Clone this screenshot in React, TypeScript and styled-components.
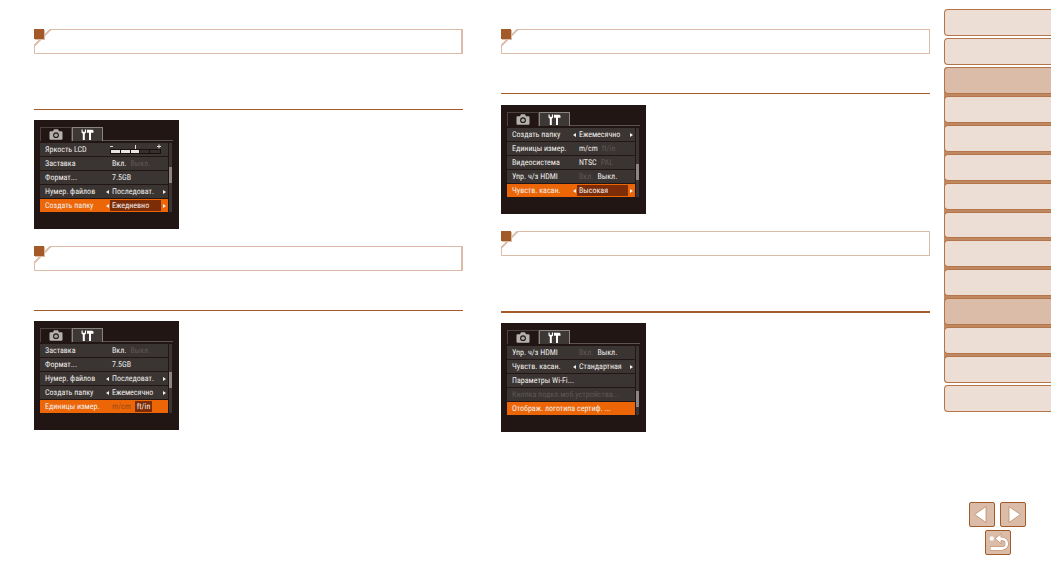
import React from "react";
import styled, { createGlobalStyle, css } from "styled-components";

const BROWN = "#a35a28";
const TAN = "#dbbca8";
const PALE = "#ecddd5";

const GlobalStyle = createGlobalStyle`
  * { box-sizing: border-box; }
  body {
    margin: 0;
    background: #fff;
    font-family: "Roboto Condensed", Roboto, "Liberation Sans", sans-serif;
    text-rendering: geometricPrecision;
  }
`;

const Page = styled.div`
  display: flex;
  align-items: flex-start;
  min-height: 100vh;
`;

const Columns = styled.main`
  flex: 1;
  display: grid;
  grid-template-columns: 1fr 1fr;
  gap: 38px;
  padding: 29px 14px 0 34px;
`;

const Column = styled.div`
  display: flex;
  flex-direction: column;
  gap: 17px;
`;

const Section = styled.section`
  display: flex;
  flex-direction: column;
`;

const Heading = styled.h2`
  display: flex;
  height: 25px;
  margin: 0;
`;

const HeadingFrame = styled.span<{ $edge: number }>`
  flex: 1;
  border: 1px solid ${TAN};
  border-left: 0;
  border-right-width: ${(p) => p.$edge}px;
`;

const Rule = styled.hr<{ $above: number; $below?: number; $weight?: number }>`
  width: 100%;
  height: ${(p) => p.$weight ?? 1}px;
  margin: ${(p) => p.$above}px 0 ${(p) => p.$below ?? 10}px;
  border: 0;
  background: ${BROWN};
`;

const Screen = styled.div`
  width: 145px;
  height: 109px;
  padding: 7px 6px;
  background: #221614;
  font-size: 8px;
  line-height: 13px;
`;

const TabBar = styled.div`
  display: flex;
  height: 14px;
  border-bottom: 1px solid #5a5350;
`;

const TabButton = styled.button<{ $active?: boolean }>`
  display: flex;
  align-items: center;
  justify-content: center;
  width: ${(p) => (p.$active ? 31 : 32)}px;
  height: 14px;
  padding: 0;
  border: 1px solid ${(p) => (p.$active ? "#8a8583" : "#4a4340")};
  border-bottom: 0;
  border-radius: 1px 1px 0 0;
  background: ${(p) => (p.$active ? "#3d3836" : "#221614")};
`;

const MenuArea = styled.div`
  display: flex;
  gap: 1px;
  margin-top: 2px;
`;

const Rows = styled.div`
  flex: 1;
  display: flex;
  flex-direction: column;
  gap: 1px;
  max-width: 128px;
`;

const Row = styled.div<{ $selected?: boolean; $dim?: boolean }>`
  display: flex;
  align-items: center;
  height: 13px;
  padding: 0 2px 0 5px;
  white-space: nowrap;
  background: ${(p) => (p.$selected ? "#ec6608" : "#3a3432")};
  color: ${(p) => (p.$dim ? "#5f5856" : "#f0eeec")};
`;

const Label = styled.span<{ $full?: boolean }>`
  flex: none;
  width: ${(p) => (p.$full ? "auto" : "61px")};
`;

const Arrow = styled.svg`
  flex: none;
  width: 3px;
  height: 4px;
  fill: #f4f0ee;
`;

const Spacer = styled.span`
  flex: none;
  width: 3px;
`;

const Value = styled.span<{ $boxed?: boolean }>`
  flex: 1;
  height: 11px;
  margin: 0 2px 0 1px;
  padding-left: 2px;
  line-height: 11px;
  ${(p) => p.$boxed && css`background: #7d2c08;`}
`;

const Choice = styled.span<{ $state: "on" | "off" | "boxed"; $onOrange?: boolean }>`
  display: inline-block;
  margin-right: 4px;
  line-height: 11px;
  color: ${(p) => (p.$state !== "off" ? "#f0eeec" : p.$onOrange ? "#9a4a14" : "#5f5856")};
  ${(p) =>
    p.$state === "boxed" &&
    css`
      padding: 0 2px;
      background: #7d2c08;
    `}
`;

const Scrollbar = styled.div<{ $top: number }>`
  width: 3px;
  height: 69px;
  padding-top: ${(p) => p.$top}px;
  background: #3a3432;
`;

const Thumb = styled.div`
  height: 16px;
  background: #8b8684;
`;

const Sidebar = styled.aside`
  display: flex;
  flex-direction: column;
  width: 107px;
  padding-top: 9px;
`;

const Links = styled.nav`
  display: flex;
  flex-direction: column;
  gap: 2px;
`;

const LinkGroup = styled.div`
  display: flex;
  flex-direction: column;
  gap: 2px;
  height: 316px;
  border-radius: 4px 0 0 4px;
  background: #c08860;
`;

const SideLink = styled.a<{ $current?: boolean; $grouped?: boolean }>`
  display: block;
  ${(p) => (p.$grouped ? css`flex: 1;` : css`height: 27px;`)}
  border: 1px solid #b5754a;
  border-right: 0;
  border-radius: 4px 0 0 4px;
  background: ${(p) => (p.$current ? TAN : PALE)};
`;

const Pager = styled.div`
  display: flex;
  flex-wrap: wrap;
  align-self: center;
  justify-content: center;
  gap: 3px 5px;
  width: 57px;
  margin-top: 90px;
`;

const PagerButton = styled.button`
  width: 26px;
  height: 25px;
  padding: 0;
  border: 1px solid ${BROWN};
  border-radius: 2px;
  background: ${TAN};
  svg { display: block; }
`;

function SectionHeading({ edge = 1 }: { edge?: number }) {
  return (
    <Heading>
      <svg width="17" height="25" viewBox="0 0 17 25" aria-hidden="true">
        <path d="M17 .5h-1L.5 16v8.500H17" fill="none" stroke={TAN} />
        <path d="M16.500 .5L.5 16.500" fill="none" stroke={TAN} strokeWidth="1.800" />
        <path d="M1 1h10v10H1z" fill={TAN} />
        <path d="M0 0h10v10H0z" fill={BROWN} />
      </svg>
      <HeadingFrame $edge={edge} />
    </Heading>
  );
}

function CameraIcon() {
  return (
    <svg width="14" height="11" viewBox="0 0 14 11" aria-hidden="true">
      <path d="M1.500 2.200h2.500L5 .3h4l1 1.900h2.500q1 0 1 1v6.500q0 1-1 1h-11q-1 0-1-1V3.200q0-1 1-1z" fill="#b4b0ae" />
      <circle cx="7" cy="6.200" r="2.900" fill="#221614" />
      <circle cx="7" cy="6.200" r="1.800" fill="#aaa6a4" />
    </svg>
  );
}

function ToolsIcon() {
  return (
    <svg width="14" height="12" viewBox="0 0 14 12" aria-hidden="true">
      <path d="M.5 .5v3l1.300 1.300V11h2V4.800l1.300-1.300v-3H3.900v2.300H1.700V.5z" fill="#fff" />
      <path d="M6 .8h5.500l1 1v2H10V11H8V3.800H6z" fill="#fff" />
    </svg>
  );
}

const Meter = styled.svg`
  flex: none;
  display: block;
`;

function Brightness() {
  return (
    <Meter width="54" height="13" viewBox="0 0 54 13" aria-hidden="true">
      <path d="M1 3.500h3M48 3.500h4M50 1.500v4M26.500 2v4" stroke="#e0dcda" fill="none" />
      <path d="M1 6h51v5H1z" fill="#1a100e" />
      <path d="M2 7h9v3H2zM12 7h9v3h-9zM22 7h8v3h-8z" fill="#e8e4e2" />
      <path d="M31 7h9v3h-9zM41 7h10v3H41z" fill="#35302e" />
    </Meter>
  );
}

type Item = {
  label: string;
  value?: string;
  choices?: [string, string];
  chosen?: 0 | 1;
  brightness?: boolean;
  arrows?: boolean;
  dim?: boolean;
};

function MenuRow({ item, selected }: { item: Item; selected: boolean }) {
  const bare = !item.value && !item.choices && !item.brightness;
  return (
    <Row $selected={selected} $dim={item.dim}>
      <Label $full={bare}>{item.label}</Label>
      {!bare && (item.arrows ? <Arrow viewBox="0 0 3 4"><path d="M3 0v4L0 2z" /></Arrow> : <Spacer />)}
      {item.value && <Value $boxed={selected}>{item.value}</Value>}
      {item.brightness && <Brightness />}
      {item.choices && (
        <Value>
          {item.choices.map((c, i) => (
            <Choice
              key={c}
              $onOrange={selected}
              $state={i !== item.chosen ? "off" : selected ? "boxed" : "on"}
            >
              {c}
            </Choice>
          ))}
        </Value>
      )}
      {item.arrows && <Arrow viewBox="0 0 3 4"><path d="M0 0v4L3 2z" /></Arrow>}
    </Row>
  );
}

function CameraScreen({ items, scroll }: { items: Item[]; scroll: number }) {
  return (
    <Screen>
      <TabBar>
        <TabButton aria-label="Съемка"><CameraIcon /></TabButton>
        <TabButton $active aria-label="Настройка"><ToolsIcon /></TabButton>
      </TabBar>
      <MenuArea>
        <Rows>
          {items.map((item, i) => (
            <MenuRow key={item.label} item={item} selected={i === items.length - 1} />
          ))}
        </Rows>
        <Scrollbar $top={scroll}><Thumb /></Scrollbar>
      </MenuArea>
    </Screen>
  );
}

const saver: Item = { label: "Заставка", choices: ["Вкл.", "Выкл."], chosen: 0 };
const format: Item = { label: "Формат...", value: "7.5GB" };
const numbering: Item = { label: "Нумер. файлов", value: "Последоват.", arrows: true };
const hdmi: Item = { label: "Упр. ч/з HDMI", choices: ["Вкл.", "Выкл."], chosen: 1 };
const folder = (value: string): Item => ({ label: "Создать папку", value, arrows: true });
const units = (chosen: 0 | 1): Item => ({ label: "Единицы измер.", choices: ["m/cm", "ft/in"], chosen });
const touch = (value: string): Item => ({ label: "Чувств. касан.", value, arrows: true });

const folderMenu: Item[] = [{ label: "Яркость LCD", brightness: true }, saver, format, numbering, folder("Ежедневно")];
const unitsMenu: Item[] = [saver, format, numbering, folder("Ежемесячно"), units(1)];
const touchMenu: Item[] = [
  folder("Ежемесячно"),
  units(0),
  { label: "Видеосистема", choices: ["NTSC", "PAL"], chosen: 0 },
  hdmi,
  touch("Высокая"),
];
const logoMenu: Item[] = [
  hdmi,
  touch("Стандартная"),
  { label: "Параметры Wi-Fi..." },
  { label: "Кнопка подкл.моб.устройства...", dim: true },
  { label: "Отображ. логотипа сертиф. ..." },
];

const chapters = Array.from({ length: 11 }, (_, i) => i + 1);

export default function App() {
  return (
    <>
      <GlobalStyle />
      <Page>
        <Columns>
          <Column>
            <Section>
              <SectionHeading edge={2} />
              <Rule $above={55} />
              <CameraScreen items={folderMenu} scroll={24} />
            </Section>
            <Section>
              <SectionHeading edge={2} />
              <Rule $above={39} />
              <CameraScreen items={unitsMenu} scroll={28} />
            </Section>
          </Column>
          <Column>
            <Section>
              <SectionHeading />
              <Rule $above={39} $below={11} />
              <CameraScreen items={touchMenu} scroll={36} />
            </Section>
            <Section>
              <SectionHeading />
              <Rule $above={55} $weight={2} />
              <CameraScreen items={logoMenu} scroll={45} />
            </Section>
          </Column>
        </Columns>
        <Sidebar>
          <Links>
            <SideLink href="#cover" aria-label="Обложка" />
            <SideLink href="#before" aria-label="Перед началом работы" />
            <LinkGroup>
              {chapters.map((n) => (
                <SideLink key={n} href={`#chapter-${n}`} aria-label={`Глава ${n}`} $grouped $current={n === 1 || n === 9} />
              ))}
            </LinkGroup>
            <SideLink href="#index" aria-label="Алфавитный указатель" />
          </Links>
          <Pager>
            <PagerButton aria-label="Предыдущая страница">
              <svg width="24" height="23" viewBox="0 0 24 23"><path d="M16 3.500v16L4.500 11.500z" fill="#fff" stroke="#bf8a66" strokeWidth=".8" /></svg>
            </PagerButton>
            <PagerButton aria-label="Следующая страница">
              <svg width="24" height="23" viewBox="0 0 24 23"><path d="M8 3.500v16l11.500-8z" fill="#fff" stroke="#bf8a66" strokeWidth=".8" /></svg>
            </PagerButton>
            <PagerButton aria-label="Назад">
              <svg width="24" height="23" viewBox="0 0 24 23">
                <path d="M4 17.500h12a4.800 4.800 0 0 0 0-9.600H14" fill="none" stroke="#bf8a66" strokeWidth="4" />
                <path d="M9 7.700l6-5v10z" fill="#fff" stroke="#bf8a66" strokeWidth=".8" />
                <path d="M4.500 17.500H16a4.800 4.800 0 0 0 0-9.600H14" fill="none" stroke="#fff" strokeWidth="2.800" />
                <circle cx="5.800" cy="7.500" r="2.200" fill="#fff" />
              </svg>
            </PagerButton>
          </Pager>
        </Sidebar>
      </Page>
    </>
  );
}
